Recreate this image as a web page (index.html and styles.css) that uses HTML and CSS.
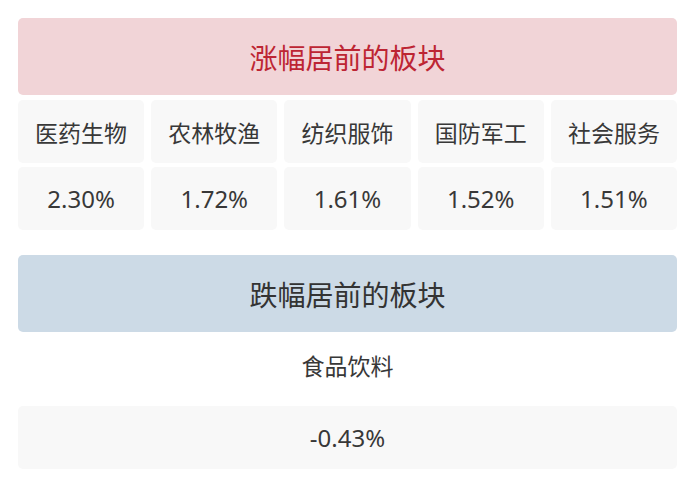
FILE: index.html
```html
<!DOCTYPE html>
<html lang="zh">
<head>
<meta charset="utf-8">
<link rel="stylesheet" href="styles.css">
</head>
<body>
<div class="page">
  <section class="block">
    <div class="head head-up">涨幅居前的板块</div>
    <div class="grid five">
      <div class="cell">医药生物</div>
      <div class="cell">农林牧渔</div>
      <div class="cell">纺织服饰</div>
      <div class="cell">国防军工</div>
      <div class="cell">社会服务</div>
      <div class="cell num">2.30%</div>
      <div class="cell num">1.72%</div>
      <div class="cell num">1.61%</div>
      <div class="cell num">1.52%</div>
      <div class="cell num">1.51%</div>
    </div>
  </section>
  <section class="block">
    <div class="head head-down">跌幅居前的板块</div>
    <div class="grid one">
      <div class="cell plain">食品饮料</div>
      <div class="cell num">-0.43%</div>
    </div>
  </section>
</div>
</body>
</html>
```
FILE: styles.css
```css
* { box-sizing: border-box; }
html, body { margin: 0; padding: 0; background: #fff; }
body {
  font-family: "Noto Sans CJK SC", "Noto Sans", sans-serif;
  color: #333;
}
.page {
  padding: 18px 23px 0 18px;
  display: flex;
  flex-direction: column;
  gap: 25px;
}
.block {
  display: flex;
  flex-direction: column;
  gap: 5px;
}
.head {
  height: 77px;
  border-radius: 5px;
  display: flex;
  align-items: center;
  justify-content: center;
  font-size: 28px;
}
.head-up { background: #f1d4d7; color: #bd2533; }
.head-down { background: #ccdae6; color: #333; }
.grid {
  display: grid;
  column-gap: 7px;
  row-gap: 4px;
}
.five { grid-template-columns: repeat(5, 1fr); }
.one { grid-template-columns: 1fr; }
.cell {
  height: 63px;
  border-radius: 5px;
  background: #f8f8f8;
  display: flex;
  align-items: center;
  justify-content: center;
  font-size: 23px;
  color: #383838;
}
.cell.plain { background: #fff; height: 65px; padding-bottom: 10px; }
.num { font-family: "Noto Sans", sans-serif; font-size: 24px; }
```
